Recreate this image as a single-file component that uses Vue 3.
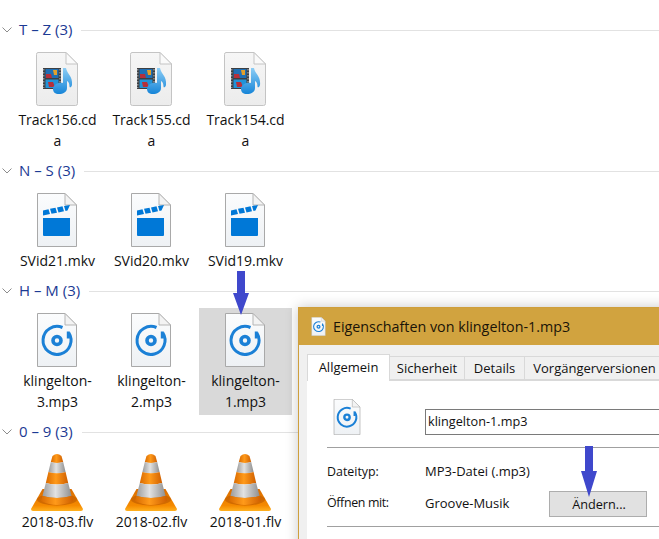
<template>
  <div class="screen">
    <svg class="sprites" width="0" height="0" aria-hidden="true">
      <defs>
        <linearGradient id="paper" x1="0" y1="0" x2="0" y2="1">
          <stop offset="0" stop-color="#fbfcfd" />
          <stop offset="1" stop-color="#eef1f4" />
        </linearGradient>
        <linearGradient id="cdaPaper" x1="0" y1="0" x2="0" y2="1">
          <stop offset="0" stop-color="#f6f6f6" />
          <stop offset="1" stop-color="#ececec" />
        </linearGradient>
        <linearGradient id="orange" x1="0" y1="0" x2="1" y2="0">
          <stop offset="0" stop-color="#d96a00" />
          <stop offset="0.45" stop-color="#ff9a1a" />
          <stop offset="1" stop-color="#cf5f00" />
        </linearGradient>
        <linearGradient id="grey" x1="0" y1="0" x2="1" y2="0">
          <stop offset="0" stop-color="#9a9a9a" />
          <stop offset="0.45" stop-color="#e2e2e2" />
          <stop offset="1" stop-color="#8f8f8f" />
        </linearGradient>
        <linearGradient id="base" x1="0" y1="0" x2="0" y2="1">
          <stop offset="0" stop-color="#d96c00" />
          <stop offset="0.75" stop-color="#f58a00" />
          <stop offset="1" stop-color="#ffb11f" />
        </linearGradient>
        <linearGradient id="note" x1="0" y1="0" x2="0" y2="1">
          <stop offset="0" stop-color="#8ccdf5" />
          <stop offset="1" stop-color="#1685d8" />
        </linearGradient>

        <symbol id="doc-mp3" viewBox="0 0 42 54">
          <path d="M1.5 .5H29L40.5 12V53.5H1.5Z" fill="url(#paper)" stroke="#a9a9a9" />
          <path d="M29 .5V12H40.5Z" fill="#f3f3f3" stroke="#b5b5b5" />
          <path d="M26.5 14.5A14 14 0 1 0 32.800 19.800" fill="none" stroke="#1b80d6" stroke-width="3" />
          <path d="M32.300 18.500V25.500" fill="none" stroke="#1b80d6" stroke-width="3" />
          <circle cx="21" cy="27.500" r="4" fill="none" stroke="#1b80d6" stroke-width="3.600" />
        </symbol>

        <symbol id="doc-mkv" viewBox="0 0 42 54">
          <path d="M1.5 .5H29L40.5 12V53.5H1.5Z" fill="url(#paper)" stroke="#a9a9a9" />
          <path d="M29 .5V12H40.5Z" fill="#f3f3f3" stroke="#b5b5b5" />
          <path d="M7 25H34V42Q34 43 33 43H8Q7 43 7 42Z" fill="#0078d7" />
          <path d="M7 17.500L12.500 16.200L14 21L7 22.500Z M14 15.800L19.500 14.700L21 19.700L15.500 20.700Z M21 14.400L26.500 13.300L28 18.300L22.500 19.400Z M28 13L34 12L31.500 17.500L29.500 18Z" fill="#0078d7" />
        </symbol>

        <symbol id="doc-cda" viewBox="0 0 42 54">
          <path d="M2 .5H30L41.5 12V51.5Q41.5 53.5 39.5 53.5H2.500Q.5 53.5 .5 51.500V2.500Q.5 .5 2 .5Z" fill="url(#cdaPaper)" stroke="#c4c4c4" />
          <path d="M30 .5V12H41.500Z" fill="#fafafa" stroke="#c4c4c4" />
          <rect x="7" y="16" width="18" height="21" fill="#3d3f42" />
          <rect x="9.500" y="17" width="13" height="9" fill="#1f6fb4" />
          <rect x="9.500" y="27.500" width="13" height="8.500" fill="#2293d8" />
          <path d="M10 22H15L16 26H10Z M12 30H17L19 35H13Z" fill="#b5303a" />
          <path d="M17 18H21V23H18Z" fill="#e3a02a" />
          <path d="M7.800 17V36M24 17V36" stroke="#b9bcc0" stroke-width="1" stroke-dasharray="1.500 1.500" />
          <path d="M27 16H30C31 22 37 24 36 33C35.500 35.500 33.500 36 33.500 34.500C33.500 30.500 32 29.500 31 29V36C31 40 27 42 23 42C19 42 17 40 17 37C17 33 22 30 27 31Z" fill="url(#note)" />
        </symbol>

        <symbol id="cone" viewBox="0 0 52 58">
          <path d="M11.500 36H40.500L52 56Q52 58 50 58H2Q0 58 0 56Z" fill="url(#base)" />
          <ellipse cx="26" cy="46.500" rx="20" ry="6" fill="#b85500" opacity=".55" />
          <path d="M21.500 3Q26 -1 30.500 3L32.200 9Q26 11 19.800 9Z" fill="url(#orange)" />
          <path d="M19.800 9Q26 11 32.200 9L34.600 19Q26 21.500 17.400 19Z" fill="url(#grey)" />
          <path d="M17.400 19Q26 21.500 34.600 19L37.200 30Q26 33 14.800 30Z" fill="url(#orange)" />
          <path d="M14.800 30Q26 33 37.200 30L40.600 43Q26 47 11.400 43Z" fill="url(#grey)" />
          <path d="M11.400 43Q26 47 40.600 43L42 48Q26 56 10 48Z" fill="url(#orange)" />
        </symbol>
      </defs>
    </svg>

    <section v-for="group in groups" :key="group.title" class="group">
      <header class="group-head">
        <svg class="chevron" width="10" height="6" viewBox="0 0 10 6">
          <path d="M.5 .5L5 5L9.500 .5" fill="none" stroke="#8c8c8c" />
        </svg>
        <span class="group-title">{{ group.title }}</span>
        <span class="group-line"></span>
      </header>
      <div class="items">
        <div
          v-for="file in group.files"
          :key="file"
          class="item"
          :class="{ selected: file === selectedFile }"
        >
          <svg class="file-icon" :class="{ cone: group.icon === 'cone' }">
            <use :href="'#' + group.icon" />
          </svg>
          <div class="file-name">{{ file }}</div>
        </div>
      </div>
    </section>

    <div class="dialog">
      <div class="title-bar">
        <svg class="title-icon"><use href="#doc-mp3" /></svg>
        <span>Eigenschaften von klingelton-1.mp3</span>
      </div>
      <div class="dialog-body">
        <div class="tabs">
          <div
            v-for="(tab, i) in tabs"
            :key="tab.label"
            class="tab"
            :class="{ active: i === 0 }"
            :style="{ width: tab.width + 'px' }"
          >
            {{ tab.label }}
          </div>
        </div>
        <div class="panel">
          <div class="name-row">
            <svg class="panel-icon"><use href="#doc-mp3" /></svg>
            <div class="name-input">klingelton-1.mp3</div>
          </div>
          <div class="rule"></div>
          <div class="props">
            <span class="prop-label">Dateityp:</span>
            <span class="wide">MP3-Datei (.mp3)</span>
            <span class="prop-label open-with">Öffnen mit:</span>
            <span class="open-with">Groove-Musik</span>
            <button type="button" class="change-btn">Ändern...</button>
          </div>
          <div class="rule rule-bottom"></div>
        </div>
      </div>
    </div>

    <svg class="arrow arrow-top" width="16" height="44" viewBox="0 0 16 44">
      <path d="M4 0H12V22H16L8 44L0 22H4Z" fill="#3f48cc" />
    </svg>
    <svg class="arrow arrow-bottom" width="16" height="51" viewBox="0 0 16 51">
      <path d="M4 0H12V25H16L8 51L0 25H4Z" fill="#3f48cc" />
    </svg>
  </div>
</template>

<script setup>
const selectedFile = 'klingelton-1.mp3'

const groups = [
  { title: 'T – Z (3)', icon: 'doc-cda', files: ['Track156.cda', 'Track155.cda', 'Track154.cda'] },
  { title: 'N – S (3)', icon: 'doc-mkv', files: ['SVid21.mkv', 'SVid20.mkv', 'SVid19.mkv'] },
  { title: 'H – M (3)', icon: 'doc-mp3', files: ['klingelton-3.mp3', 'klingelton-2.mp3', 'klingelton-1.mp3'] },
  { title: '0 – 9 (3)', icon: 'cone', files: ['2018-03.flv', '2018-02.flv', '2018-01.flv'] }
]

const tabs = [
  { label: 'Allgemein', width: 83 },
  { label: 'Sicherheit', width: 75 },
  { label: 'Details', width: 60 },
  { label: 'Vorgängerversionen', width: 140 }
]
</script>

<style>
html,
body {
  margin: 0;
  overflow: hidden;
  background: #fff;
}
</style>

<style scoped>
.screen {
  position: relative;
  width: 659px;
  height: 539px;
  padding-top: 13px;
  box-sizing: border-box;
  overflow: hidden;
  background: #fff;
  color: #111;
  font-family: "Open Sans", "Noto Sans", sans-serif;
  font-size: 14px;
}

.sprites {
  position: absolute;
}

.group-head {
  display: flex;
  align-items: center;
  height: 34px;
  padding-left: 2px;
}

.chevron {
  flex-shrink: 0;
  margin-right: 7px;
}

.group-title {
  color: #1c3a94;
  white-space: nowrap;
  margin-right: 9px;
  margin-bottom: 2px;
  font-size: 15px;
}

.group-line {
  flex: 1;
  height: 1px;
  background: #e2e2e2;
}

.items {
  display: flex;
  gap: 1px;
  padding-left: 11px;
}

.item {
  width: 93px;
  padding: 5px 0 3px;
  display: flex;
  flex-direction: column;
  align-items: center;
}

.item.selected {
  background: #d9d9d9;
}

.file-icon {
  display: block;
  width: 42px;
  height: 54px;
  margin-right: 2px;
  margin-bottom: 3px;
}

.file-icon.cone {
  width: 52px;
  height: 58px;
  margin-top: -1px;
  margin-right: 1px;
  margin-bottom: 0;
}

.file-name {
  width: 80px;
  line-height: 21px;
  text-align: center;
  overflow-wrap: anywhere;
}

.dialog {
  position: absolute;
  left: 298px;
  top: 307px;
  width: 420px;
  height: 300px;
  border: 1px solid #cf9f3c;
  background: #f0f0f0;
  box-shadow: 0 0 12px rgba(0, 0, 0, 0.22);
}

.title-bar {
  display: flex;
  align-items: center;
  gap: 7px;
  height: 37px;
  padding-left: 12px;
  background: #d1a33f;
  font-size: 14.3px;
  color: #1a1408;
}

.title-icon {
  width: 15px;
  height: 19px;
}

.dialog-body {
  padding-top: 8px;
  padding-left: 8px;
  height: 100%;
}

.tabs {
  display: flex;
  align-items: flex-end;
  height: 27px;
}

.tab {
  box-sizing: border-box;
  flex-shrink: 0;
  height: 24px;
  line-height: 23px;
  text-align: center;
  white-space: nowrap;
  border: 1px solid #d9d9d9;
  border-left: 0;
  background: #f0f0f0;
  font-size: 13px;
}

.tab.active {
  height: 27px;
  margin-bottom: -1px;
  line-height: 24px;
  border: 1px solid #d9d9d9;
  border-bottom: 0;
  background: #fff;
  position: relative;
}

.panel {
  background: #fff;
  border-top: 1px solid #d9d9d9;
  padding: 18px 0 0 20px;
  height: 100%;
}

.name-row {
  display: flex;
  align-items: center;
  height: 35px;
}

.panel-icon {
  flex-shrink: 0;
  width: 28px;
  height: 36px;
  margin-left: 6px;
}

.name-input {
  box-sizing: border-box;
  flex-shrink: 0;
  width: 320px;
  height: 26px;
  margin-left: 64px;
  margin-top: 10px;
  padding-left: 2px;
  line-height: 23px;
  border: 1px solid #7a7a7a;
  font-size: 12.7px;
}

.rule {
  height: 1px;
  margin-top: 13px;
  background: #a0a0a0;
}

.rule-bottom {
  margin-top: 9px;
}

.props {
  display: grid;
  grid-template-columns: 98px 124px 98px;
  grid-template-rows: 20px 26px;
  row-gap: 10px;
  align-items: center;
  margin-top: 13px;
  font-size: 13px;
}

.prop-label {
  font-size: 12.4px;
}

.prop-label.open-with {
  letter-spacing: -0.35px;
}

.open-with {
  margin-bottom: 3px;
}

.wide {
  grid-column: 2 / 4;
}

.change-btn {
  box-sizing: border-box;
  height: 26px;
  padding: 0 0 0 2px;
  border: 1px solid #adadad;
  background: #e1e1e1;
  color: #111;
  font: inherit;
  font-size: 12.7px;
}

.arrow {
  position: absolute;
}

.arrow-top {
  left: 233px;
  top: 271px;
}

.arrow-bottom {
  left: 581px;
  top: 446px;
}
</style>
